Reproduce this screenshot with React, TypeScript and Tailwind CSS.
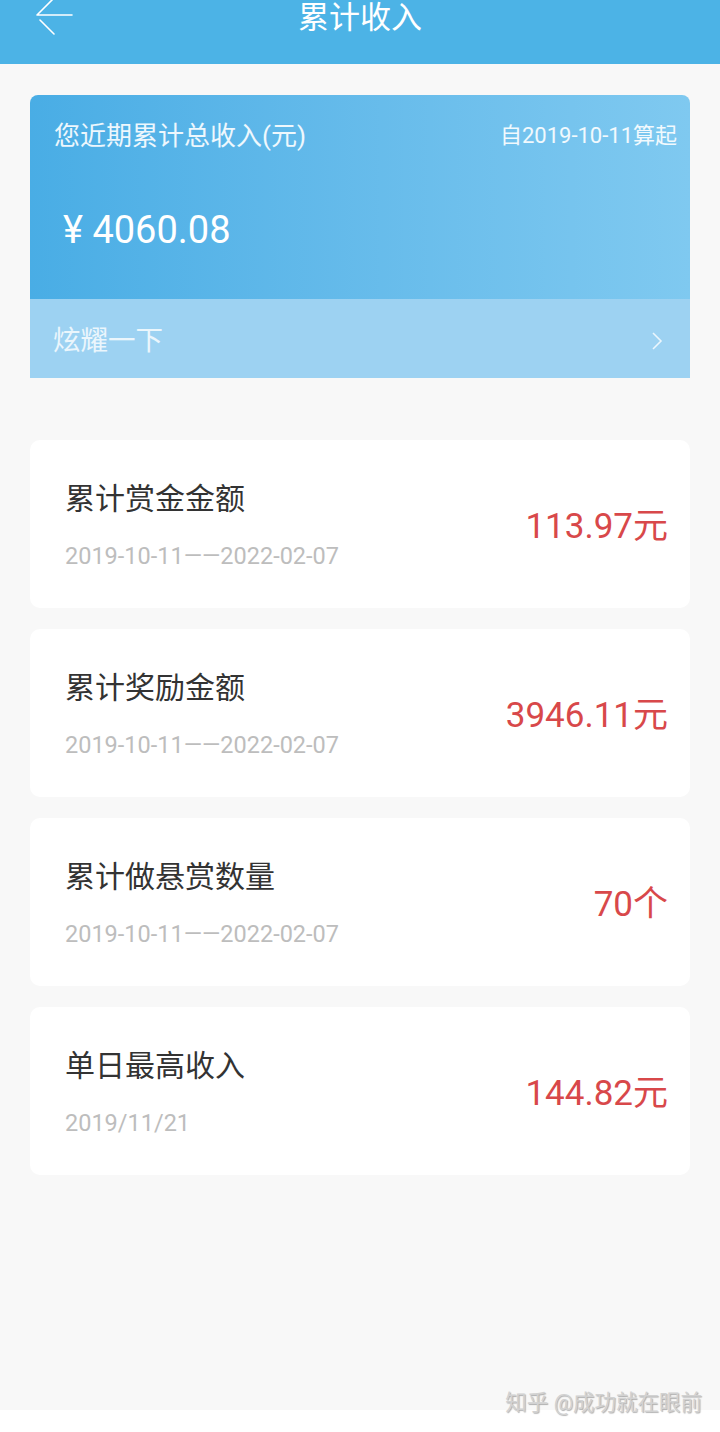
const FONT = "font-['Roboto','Noto_Sans_CJK_SC',sans-serif]";

interface StatItem {
  title: string;
  range: string;
  value: string;
}

const STATS: StatItem[] = [
  { title: "累计赏金金额", range: "2019-10-11——2022-02-07", value: "113.97元" },
  { title: "累计奖励金额", range: "2019-10-11——2022-02-07", value: "3946.11元" },
  { title: "累计做悬赏数量", range: "2019-10-11——2022-02-07", value: "70个" },
  { title: "单日最高收入", range: "2019/11/21", value: "144.82元" },
];

function BackArrow() {
  return (
    <svg width="40" height="40" viewBox="0 0 40 40" className="absolute left-[34px] top-[-4px]">
      <path
        d="M3 19 H38 M3 19 L19 3 M6 24 L20 38"
        stroke="#ffffff"
        strokeWidth="1.6"
        fill="none"
        strokeLinecap="round"
      />
    </svg>
  );
}

function StatCard({ item }: { item: StatItem }) {
  return (
    <div className="flex h-[168px] items-center justify-between rounded-[10px] bg-white pl-[35px] pr-[22px]">
      <div className="mt-[4px] flex flex-col">
        <span className="text-[30px] leading-[36px] text-[#333333]">{item.title}</span>
        <span className="mt-[24px] text-[23.5px] leading-[30px] text-[#bdbdbd]">{item.range}</span>
      </div>
      <span className="mt-[6px] text-[35px] leading-[44px] text-[#d8484a]">{item.value}</span>
    </div>
  );
}

export default function App() {
  return (
    <div className={`${FONT} relative w-[720px] bg-white`}>
      <div className="min-h-[1410px] bg-[#f8f8f8]">
        <header className="relative flex h-[64px] justify-center bg-[#4cb3e6]">
          <BackArrow />
          <h1 className="text-[31px] leading-[36px] text-white">累计收入</h1>
        </header>

        <section className="mx-[30px] mt-[31px] overflow-hidden rounded-t-[8px]">
          <div className="h-[204px] bg-gradient-to-r from-[#49ade5] to-[#7fc9f0] px-[24px] pt-[24px]">
            <div className="flex items-center justify-between">
              <span className="text-[26px] leading-[34px] text-white/90">您近期累计总收入(元)</span>
              <span className="mr-[-11px] text-[22px] leading-[34px] text-white/90">自2019-10-11算起</span>
            </div>
            <div className="ml-[9px] mt-[54px] text-[38px] leading-[46px] text-white">¥ 4060.08</div>
          </div>
          <div className="flex h-[79px] items-center justify-between bg-[#9dd2f2] pl-[23px] pr-[26px] pt-[5px]">
            <span className="text-[27.5px] leading-[34px] text-white/80">炫耀一下</span>
            <svg width="14" height="20" viewBox="0 0 14 20">
              <path d="M3 2 L11 10 L3 18" stroke="#ffffff" strokeOpacity="0.8" strokeWidth="1.6" fill="none" />
            </svg>
          </div>
        </section>

        <main className="mx-[30px] mt-[62px] flex flex-col gap-[21px]">
          {STATS.map((s) => (
            <StatCard key={s.title} item={s} />
          ))}
        </main>
      </div>
      <div className="h-[22px] bg-white" />
      <span className="absolute right-[18px] top-[1388px] text-[21.5px] leading-[30px] text-[#d2d2d2] [text-shadow:1px_1px_1px_rgba(0,0,0,0.3)]">
        知乎 @成功就在眼前
      </span>
    </div>
  );
}
